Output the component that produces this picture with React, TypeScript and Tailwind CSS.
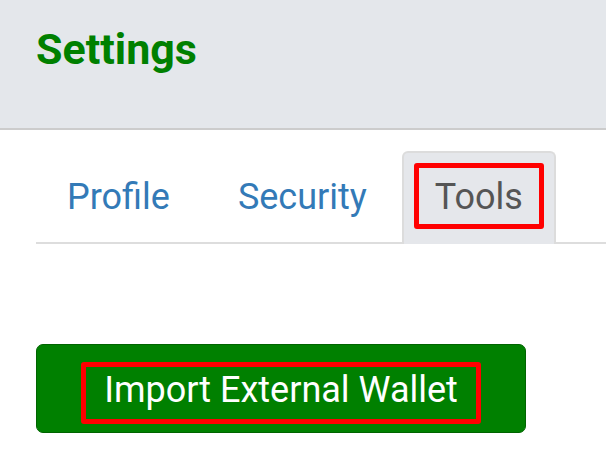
import React from "react";

const font = { fontFamily: "Roboto, 'Liberation Sans', sans-serif" };

function Tab({ label, active }: { label: string; active?: boolean }) {
  return (
    <div
      className={
        "mr-[2px] mb-[-2px] rounded-t-[6px] border-2 border-b-0 px-[10px] pt-[10px] pb-[15px] " +
        (active ? "border-[#dcdcdc] bg-[#e5e7eb]" : "border-transparent")
      }
    >
      <div
        className={
          "rounded-[3px] border-[5px] px-[16px] h-[66px] pt-[1px] leading-[56px] text-[36px] " +
          (active ? "border-[#ff0000] text-[#555555]" : "border-transparent text-[#337ab7]")
        }
      >
        {label}
      </div>
    </div>
  );
}

export default function App() {
  return (
    <div className="w-[606px] h-[454px] overflow-hidden bg-white" style={font}>
      <div className="h-[130px] bg-[#e4e7eb] border-b-2 border-[#cccccc] pl-[36px] pt-[28px]">
        <div className="text-[43px] leading-none font-bold text-[#008000]">Settings</div>
      </div>
      <div className="ml-[36px] mt-[21px] border-b-2 border-[#dddddd]">
        <div className="ml-[-2px] flex">
          <Tab label="Profile" />
          <Tab label="Security" />
          <Tab label="Tools" active />
        </div>
      </div>
      <div className="ml-[36px] mt-[100px] w-[490px] h-[89px] rounded-[7px] border border-[#006400] bg-[#008000] flex justify-center pt-[17px]">
        <div className="h-[62px] rounded-[3px] border-[5px] border-[#ff0000] px-[18px] leading-[46px] text-[36px] text-white">
          Import External Wallet
        </div>
      </div>
    </div>
  );
}
